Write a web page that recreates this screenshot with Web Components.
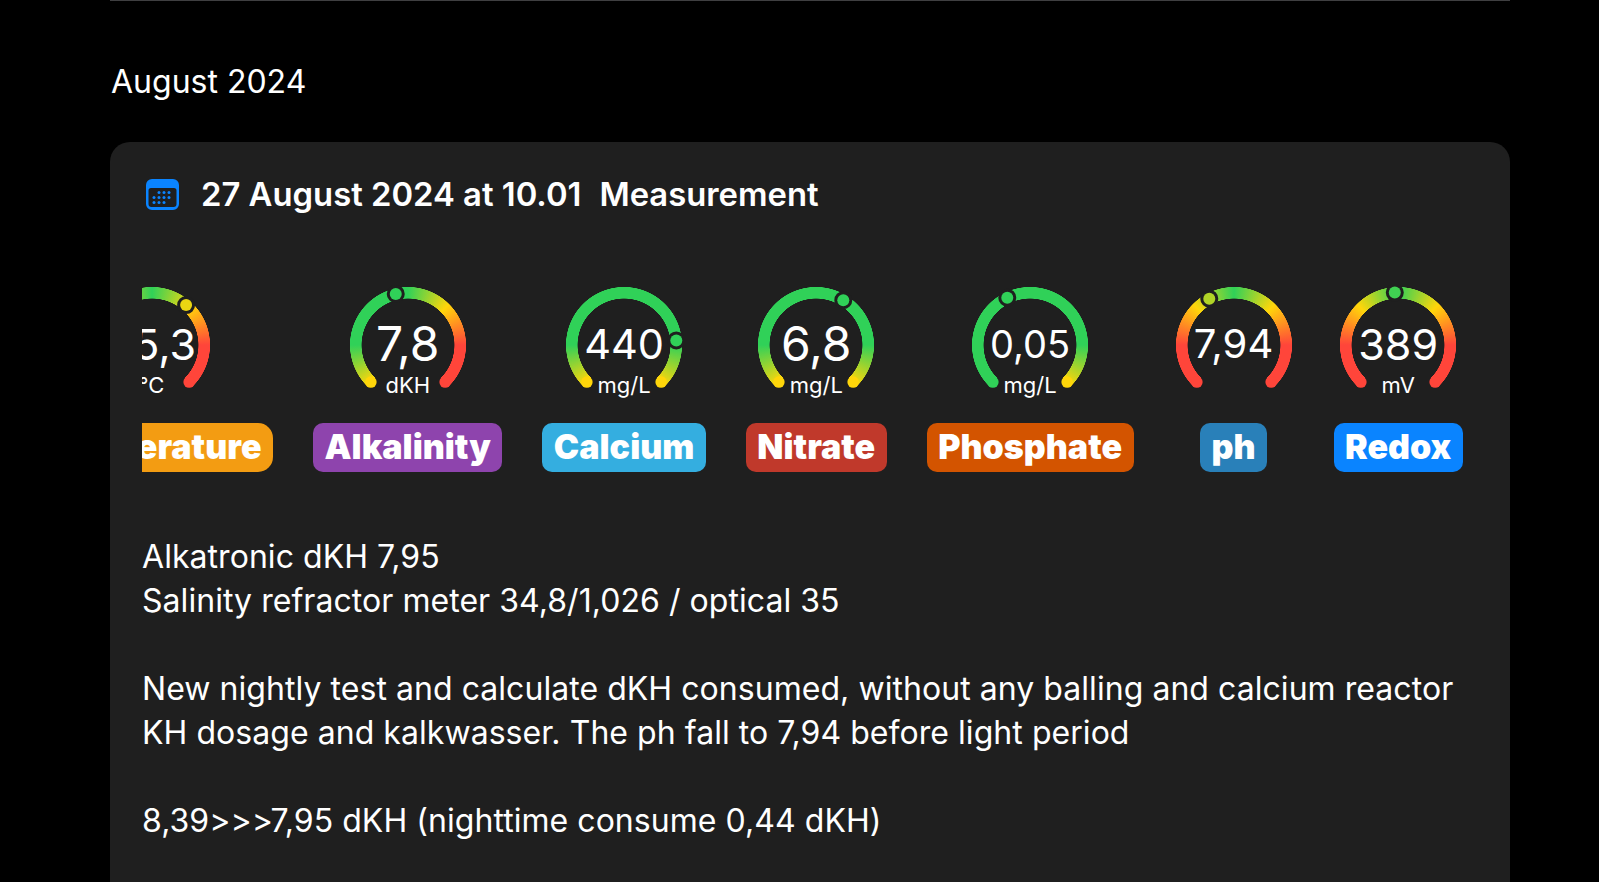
<!DOCTYPE html>
<html>
<head>
<meta charset="utf-8">
<style>
  html, body { margin: 0; height: 100%; background: #000; overflow: hidden; }
  body { font-family: Inter, "Liberation Sans", sans-serif; color: #fff; }
</style>
</head>
<body>
<log-page>
  <span slot="month">August 2024</span>
  <log-card>
    <span slot="title">27 August 2024 at 10.01</span>
    <span slot="kind">Measurement</span>
    <log-gauge slot="gauges" value="25,3" unit="°C" label="Temperature" colour="#f39c12" dot="0.65" size="43" radius="15" stops="red red yellow green yellow red red"></log-gauge>
    <log-gauge slot="gauges" value="7,8" unit="dKH" label="Alkalinity" colour="#8e44ad" dot="0.45" size="48" stops="yellow green green green yellow red red"></log-gauge>
    <log-gauge slot="gauges" value="440" unit="mg/L" label="Calcium" colour="#34aee0" dot="0.815" size="41.500" stops="yellow green green green green green yellow"></log-gauge>
    <log-gauge slot="gauges" value="6,8" unit="mg/L" label="Nitrate" colour="#c0392b" dot="0.616" size="48" stops="yellow green green green green green yellow"></log-gauge>
    <log-gauge slot="gauges" value="0,05" unit="mg/L" label="Phosphate" colour="#d35400" dot="0.405" size="38" stops="green green green green green green yellow"></log-gauge>
    <log-gauge slot="gauges" value="7,94" unit="" label="ph" colour="#2980b9" dot="0.396" size="40" stops="red red yellow green yellow red red"></log-gauge>
    <log-gauge slot="gauges" value="389" unit="mV" label="Redox" colour="#0a84ff" dot="0.487" size="43" stops="red red yellow green yellow red red"></log-gauge>
    <div>Alkatronic dKH 7,95</div>
    <div>Salinity refractor meter 34,8/1,026 / optical 35</div>
    <div>&nbsp;</div>
    <div>New nightly test and calculate dKH consumed, without any balling and calcium reactor</div>
    <div>KH dosage and kalkwasser. The ph fall to 7,94 before light period</div>
    <div>&nbsp;</div>
    <div>8,39&gt;&gt;&gt;7,95 dKH (nighttime consume 0,44 dKH)</div>
  </log-card>
</log-page>

<script>
class LogPage extends HTMLElement {
  constructor() {
    super();
    this.attachShadow({ mode: "open" }).innerHTML = `
      <style>
        :host { display: block; width: 1400px; margin-left: 110px; }
        .rule { height: 1px; background: #3f3f41; }
        .month { font-size: 32px; line-height: 40px; padding: 61px 0 40px 1px; }
      </style>
      <div class="rule"></div>
      <div class="month"><slot name="month"></slot></div>
      <slot></slot>`;
  }
}
customElements.define("log-page", LogPage);

class LogCard extends HTMLElement {
  constructor() {
    super();
    this.attachShadow({ mode: "open" }).innerHTML = `
      <style>
        :host { display: block; background: #1f1f1f; border-radius: 20px 20px 0 0; padding: 32px 32px 0; height: 740px; box-sizing: border-box; overflow: hidden; }
        .head { display: flex; align-items: center; height: 40px; font-size: 32.800px; font-weight: 600; }
        .head svg { margin: 0 22px 0 4px; flex: none; }
        .head .kind { margin-left: 18px; }
        .row { overflow: hidden; margin-top: 71px; }
        .strip { display: flex; gap: 40px; margin-left: -112px; width: max-content; }
        .text { margin-top: 63px; font-size: 32px; line-height: 44px; letter-spacing: 0.05px; }
      </style>
      <div class="head">
        <svg width="33" height="31" viewBox="0 0 33 31">
          <path fill="#0a84ff" fill-rule="evenodd" d="M6 0h21a6 6 0 0 1 6 6v19a6 6 0 0 1-6 6H6a6 6 0 0 1-6-6V6a6 6 0 0 1 6-6zM5 9a2.500 2.500 0 0 0-2.500 2.500V25a3 3 0 0 0 3 3h22a3 3 0 0 0 3-3V11.500A2.500 2.500 0 0 0 28 9z"/>
          <g fill="#0a84ff">
            <circle cx="13" cy="13.500" r="1.500"/><circle cx="18" cy="13.500" r="1.500"/><circle cx="23" cy="13.500" r="1.500"/>
            <circle cx="8" cy="18.500" r="1.500"/><circle cx="13" cy="18.500" r="1.500"/><circle cx="18" cy="18.500" r="1.500"/><circle cx="23" cy="18.500" r="1.500"/>
            <circle cx="8" cy="23.500" r="1.500"/><circle cx="13" cy="23.500" r="1.500"/><circle cx="18" cy="23.500" r="1.500"/>
          </g>
        </svg>
        <slot name="title"></slot><span class="kind"><slot name="kind"></slot></span>
      </div>
      <div class="row"><div class="strip"><slot name="gauges"></slot></div></div>
      <div class="text"><slot></slot></div>`;
  }
}
customElements.define("log-card", LogCard);

const GAUGE_COLOURS = {
  red: [255, 69, 58],
  yellow: [255, 214, 10],
  green: [48, 209, 88]
};

class LogGauge extends HTMLElement {
  constructor() {
    super();
    this.attachShadow({ mode: "open" });
  }

  connectedCallback() {
    this._render();
  }

  // stops are evenly spaced along the 270deg sweep
  _colourAt(stops, t) {
    const pos = Math.min(t, 0.9999) * (stops.length - 1);
    const i = Math.floor(pos);
    const f = pos - i;
    const a = GAUGE_COLOURS[stops[i]];
    const b = GAUGE_COLOURS[stops[i + 1]];
    return `rgb(${a.map((v, n) => Math.round(v + (b[n] - v) * f)).join(",")})`;
  }

  _point(t) {
    const angle = (-135 + 270 * t) * Math.PI / 180;
    return [60 + 52.5 * Math.sin(angle), 60 - 52.5 * Math.cos(angle)];
  }

  _conic(stops) {
    const parts = stops.map((name, i) => {
      const deg = 270 * i / (stops.length - 1);
      return `rgb(${GAUGE_COLOURS[name].join(",")}) ${deg}deg`;
    });
    return `conic-gradient(from 225deg, ${parts.join(",")}, transparent 270deg)`;
  }

  _render() {
    const stops = this.getAttribute("stops").split(" ");
    const dot = parseFloat(this.getAttribute("dot"));
    const [dx, dy] = this._point(dot);
    const [sx, sy] = this._point(0);
    const [ex, ey] = this._point(1);
    const radius = this.getAttribute("radius") || 10;
    this.shadowRoot.innerHTML = `
      <style>
        :host { display: flex; flex-direction: column; align-items: center; flex: none; min-width: 120px; }
        .dial { display: grid; width: 120px; height: 120px; }
        .dial > * { grid-area: 1 / 1; }
        .ring { margin: 1px; background: ${this._conic(stops)};
          -webkit-mask: radial-gradient(circle at center, transparent 46.200px, #000 46.700px, #000 57.800px, transparent 58.300px);
          mask: radial-gradient(circle at center, transparent 46.200px, #000 46.700px, #000 57.800px, transparent 58.300px); }
        svg { display: block; position: relative; }
        .read { display: flex; flex-direction: column; align-items: center; position: relative; }
        .value { font-size: ${this.getAttribute("size")}px; height: 54px; line-height: 54px; margin-top: 32px; white-space: nowrap; }
        .unit { font-size: 22px; line-height: 24px; margin-top: 2px; }
        .tag { margin-top: 18px; height: 49px; line-height: 47px; padding: 0 11.500px; border-radius: ${radius}px; font-size: 34px; font-weight: 900; background: var(--tag); white-space: nowrap; }
      </style>
      <div class="dial">
        <div class="ring"></div>
        <svg width="120" height="120" viewBox="0 0 120 120">
          <circle cx="${sx}" cy="${sy}" r="5.750" fill="${this._colourAt(stops, 0)}"/>
          <circle cx="${ex}" cy="${ey}" r="5.750" fill="${this._colourAt(stops, 1)}"/>
          <circle cx="${dx}" cy="${dy}" r="6" fill="${this._colourAt(stops, dot)}" stroke="#1f1f1f" stroke-width="6" paint-order="stroke"/>
        </svg>
        <div class="read">
          <div class="value">${this.getAttribute("value")}</div>
          <div class="unit">${this.getAttribute("unit")}</div>
        </div>
      </div>
      <div class="tag" style="--tag:${this.getAttribute("colour")}">${this.getAttribute("label")}</div>`;
  }
}
customElements.define("log-gauge", LogGauge);
</script>
</body>
</html>
